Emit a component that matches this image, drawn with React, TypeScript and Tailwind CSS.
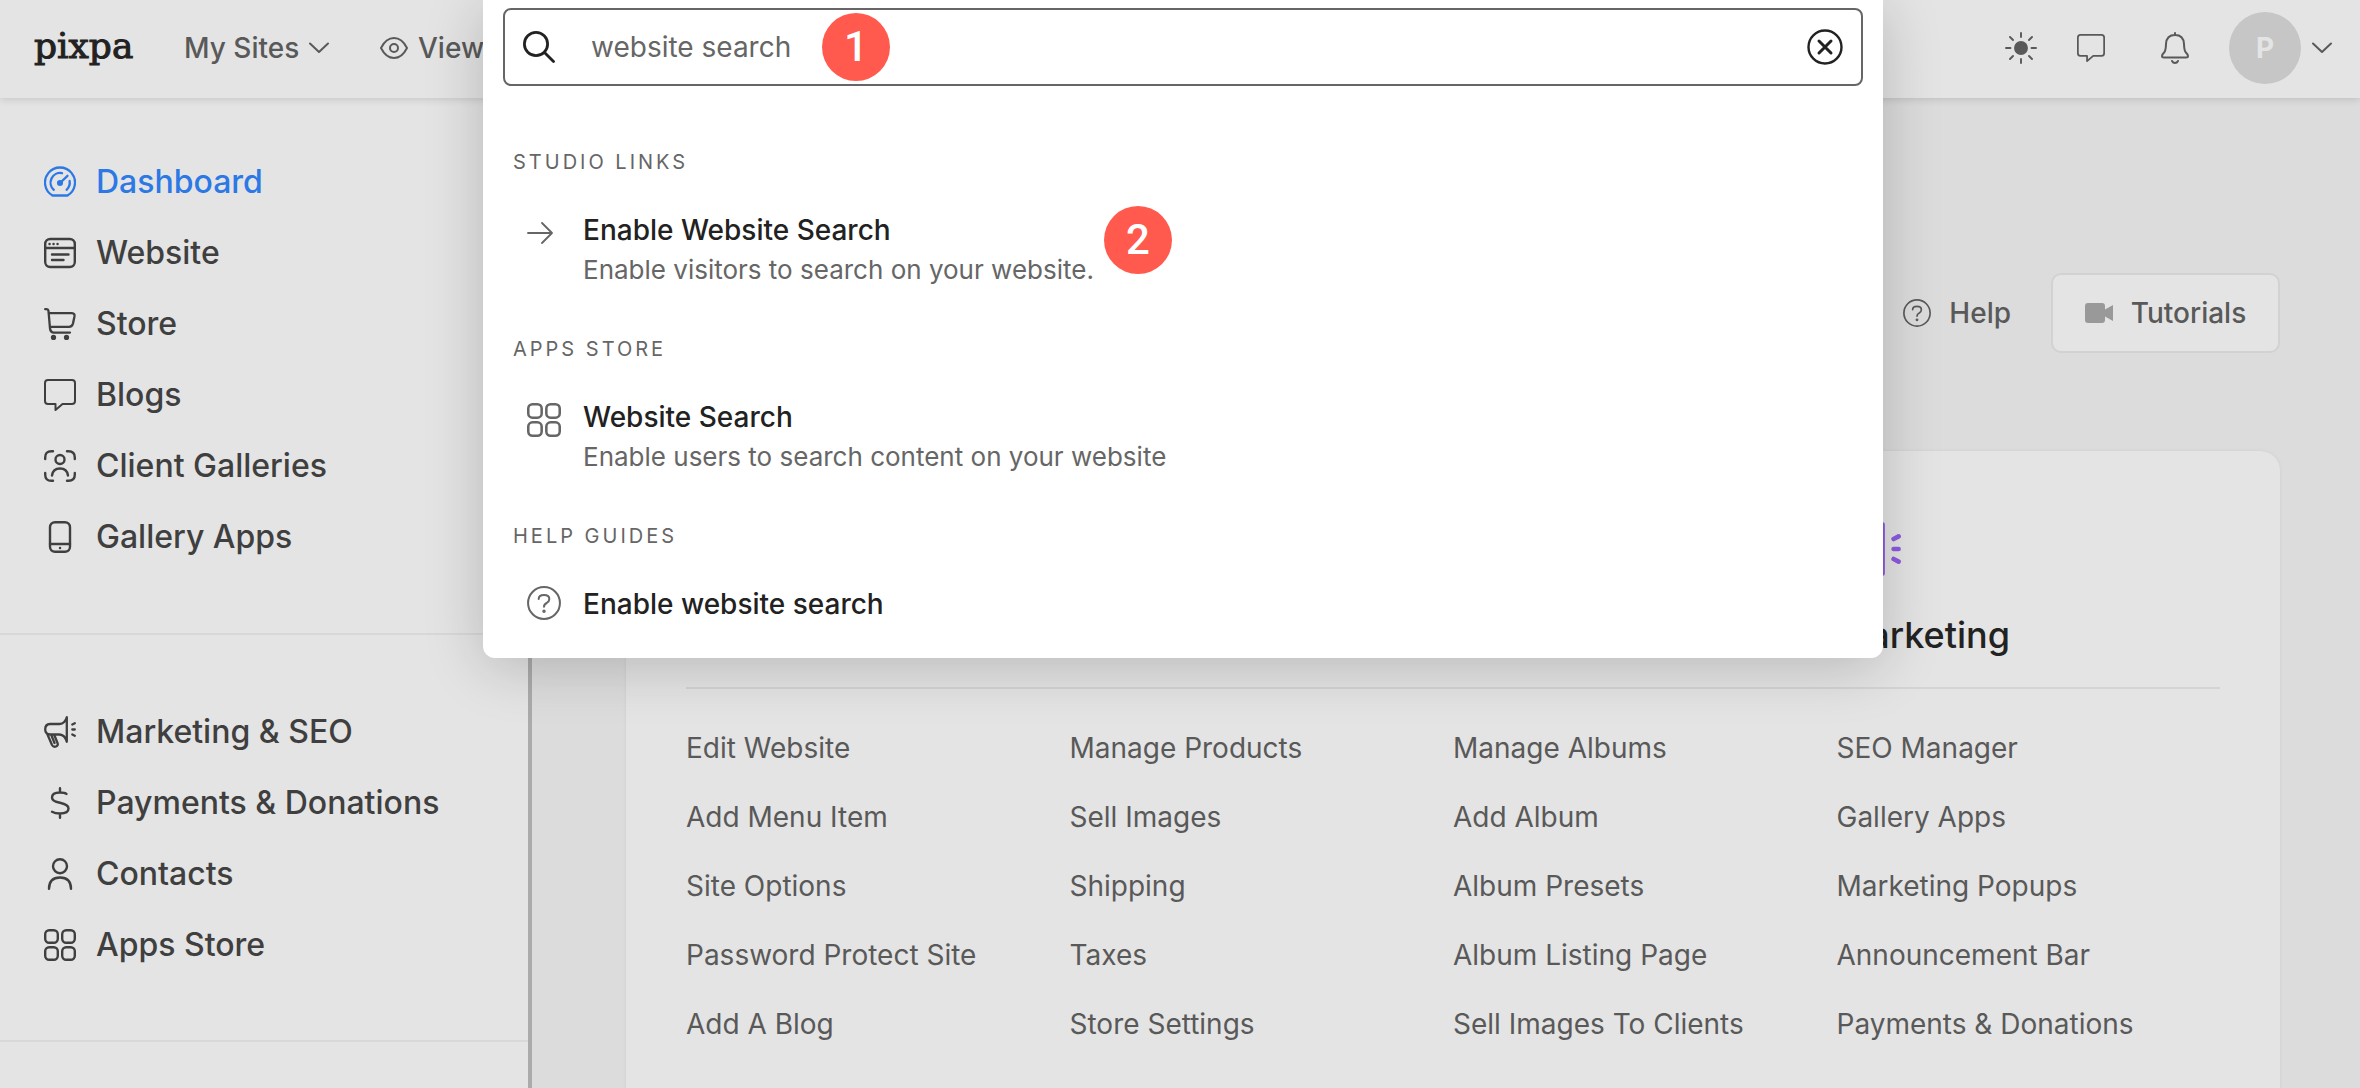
import { type ReactNode } from "react";

type IconProps = { className?: string };

function Svg({ className = "", size = "0 0 32 32", sw = 2.3, children }: IconProps & { size?: string; sw?: number; children: ReactNode }) {
  return (
    <svg viewBox={size} className={`shrink-0 ${className}`} fill="none" stroke="currentColor" strokeWidth={sw} strokeLinecap="round" strokeLinejoin="round" aria-hidden="true">
      {children}
    </svg>
  );
}

const GaugeIcon = ({ className }: IconProps) => (
  <Svg className={className}>
    <path d="M8.5 29.5 H23.5 A15 15 0 1 0 8.5 29.5 Z" />
    <path d="M9.8 23.8 A9.6 9.6 0 0 1 18 7.2 M25.6 15 A9.8 9.8 0 0 1 22.6 23.8" />
    <path d="M16 17 L23.5 9.8" />
    <circle cx="16" cy="17" r="1.9" fill="currentColor" />
  </Svg>
);
const WebsiteIcon = ({ className }: IconProps) => (
  <Svg className={className} sw={2.4}>
    <rect x="1.2" y="2" width="29.6" height="28" rx="5" />
    <path d="M1.2 11 H30.8 M8 17.5 H24.5 M8 23 H19.5" />
    <path d="M5.5 7 h.1 M9.5 7 h.1 M13.5 7 h.1" />
  </Svg>
);
const CartIcon = ({ className }: IconProps) => (
  <Svg className={className}>
    <path d="M1.2 1.2 H2.5 Q4.3 1.4 4.5 3 L6 20.5 Q6.5 24.6 10 24.6 H26" />
    <path d="M5 5.2 H28 Q30.9 5.4 30.5 8.2 L29 15.5 Q28.2 18.8 25 18.8 H6" />
    <circle cx="9.5" cy="29.5" r="1.5" fill="currentColor" />
    <circle cx="22.5" cy="29.5" r="1.5" fill="currentColor" />
  </Svg>
);
const ChatIcon = ({ className }: IconProps) => (
  <Svg className={className} sw={2}>
    <path d="M4 1 H28 Q31 1 31 4 V22 Q31 25 28 25 H18.5 L11.5 31 V25 H4 Q1 25 1 22 V4 Q1 1 4 1 Z" />
  </Svg>
);
const ClientIcon = ({ className }: IconProps) => (
  <Svg className={className} sw={2.4}>
    <path d="M1.2 9 V7.5 Q1.2 1.2 7.5 1.2 H9 M23 1.2 H24.5 Q30.8 1.2 30.8 7.5 V9 M30.8 23 V24.5 Q30.8 30.8 24.5 30.8 H23 M9 30.8 H7.5 Q1.2 30.8 1.2 24.5 V23" />
    <circle cx="16" cy="9.5" r="4.5" />
    <path d="M8 25.5 Q9 18.5 16 18.5 T24 25.5" />
  </Svg>
);
const PhoneIcon = ({ className }: IconProps) => (
  <Svg className={className} sw={2.4}>
    <rect x="6" y="1.2" width="20" height="29.6" rx="5" />
    <path d="M6 23 H26 M16 27 h.1" />
  </Svg>
);
const MegaphoneIcon = ({ className }: IconProps) => (
  <Svg className={className}>
    <path d="M22.8 1.2 V25.8 Q21 19 15.5 18.5 H6 Q1.2 18 1.2 13.2 T6 8 H15.5 Q21 7.5 22.8 1.2 Z" />
    <path d="M3.5 18.5 L8 29 Q9.5 31.5 12 30.5 T13.5 27 L10.5 19.5 M7.5 19.5 L10.5 27" />
    <path d="M28.3 8.5 L30.8 7.2 M28.3 13.5 H30.8 M28.3 18.5 L30.8 19.8" />
  </Svg>
);
const DollarIcon = ({ className }: IconProps) => (
  <Svg className={className} sw={2.4}>
    <path d="M16 1.2 V5.5 M16 26.5 V30.8 M22.5 7 Q21 5.5 16 5.5 Q8 5.5 8 10.5 Q8 14.2 16 15.8 Q24.5 17.6 24.5 21.5 Q24.5 26.5 16 26.5 Q11 26.5 8 24.8" />
  </Svg>
);
const PersonIcon = ({ className }: IconProps) => (
  <Svg className={className} sw={2.4}>
    <circle cx="16" cy="8.2" r="7" />
    <path d="M5 30.8 Q5 19.5 16 19.5 T27 30.8" />
  </Svg>
);
const AppsIcon = ({ className }: IconProps) => (
  <Svg className={className} sw={2.4}>
    <rect x="1.2" y="1.2" width="12.6" height="12.6" rx="4" />
    <rect x="18.2" y="1.2" width="12.6" height="12.6" rx="4" />
    <rect x="1.2" y="18.2" width="12.6" height="12.6" rx="4" />
    <rect x="18.2" y="18.2" width="12.6" height="12.6" rx="4" />
  </Svg>
);
const HelpIcon = ({ className }: IconProps) => (
  <Svg className={className} sw={1.9}>
    <circle cx="16" cy="16" r="15" />
    <path d="M11 12.2 Q11 8.4 16 8.4 T21 12.2 Q21 14.4 18.5 16 Q16 17.4 16 19.6" />
    <circle cx="16" cy="23.8" r=".7" fill="currentColor" />
  </Svg>
);
const ChevronIcon = ({ className }: IconProps) => (
  <Svg className={className} size="0 0 20 12" sw={2}>
    <path d="M1 1.5 L10 10 L19 1.5" />
  </Svg>
);
const EyeIcon = ({ className }: IconProps) => (
  <Svg className={className} size="0 0 28 22" sw={2}>
    <path d="M1 11 Q6 1 14 1 T27 11 Q22 21 14 21 T1 11 Z" />
    <circle cx="14" cy="11" r="4" />
  </Svg>
);
const SunIcon = ({ className }: IconProps) => (
  <Svg className={className} sw={1.9}>
    <circle cx="16" cy="16" r="6" fill="currentColor" />
    <path d="M16 1 V5 M16 27 V31 M1 16 H5.5 M26.5 16 H31 M5 5 L8 8 M24 24 L27 27 M5 27 L8 24 M24 8 L27 5" />
  </Svg>
);
const BellIcon = ({ className }: IconProps) => (
  <Svg className={className} size="0 0 28 32" sw={2}>
    <path d="M14 1 V3 M14 3 Q5.5 3 5 12 Q4.8 18 3.5 20 Q1 22.5 1 24 Q1 25.5 3 25.5 H25 Q27 25.5 27 24 Q27 22.5 24.5 20 Q23.2 18 23 12 Q22.5 3 14 3 Z" />
    <path d="M11 29 Q12 31 14 31 T17 29" />
  </Svg>
);
const VideoIcon = ({ className }: IconProps) => (
  <svg viewBox="0 0 28 20" className={className} fill="currentColor" aria-hidden="true">
    <path d="M3 0 H17 Q20 0 20 3 V6.5 L28 2 V18 L20 13.5 V17 Q20 20 17 20 H3 Q0 20 0 17 V3 Q0 0 3 0 Z" />
  </svg>
);
const SearchIcon = ({ className }: IconProps) => (
  <Svg className={className} sw={2.8}>
    <circle cx="13" cy="13" r="11.6" />
    <path d="M21.5 21.5 L30.5 30.5" />
  </Svg>
);
const ClearIcon = ({ className }: IconProps) => (
  <Svg className={className} size="0 0 36 36" sw={2.4}>
    <circle cx="18" cy="18" r="16.5" />
    <path d="M12 12 L24 24 M24 12 L12 24" strokeWidth="3" />
  </Svg>
);
const ArrowIcon = ({ className }: IconProps) => (
  <Svg className={className} size="0 0 26 22" sw={1.8}>
    <path d="M1 11 H25 M15 1 L25 11 L15 21" />
  </Svg>
);

type NavEntry = { label: string; Icon: (p: IconProps) => ReactNode; active?: boolean };

const mainNav: NavEntry[] = [
  { label: "Dashboard", Icon: GaugeIcon, active: true },
  { label: "Website", Icon: WebsiteIcon },
  { label: "Store", Icon: CartIcon },
  { label: "Blogs", Icon: ChatIcon },
  { label: "Client Galleries", Icon: ClientIcon },
  { label: "Gallery Apps", Icon: PhoneIcon },
];
const moreNav: NavEntry[] = [
  { label: "Marketing & SEO", Icon: MegaphoneIcon },
  { label: "Payments & Donations", Icon: DollarIcon },
  { label: "Contacts", Icon: PersonIcon },
  { label: "Apps Store", Icon: AppsIcon },
];

function NavList({ items }: { items: NavEntry[] }) {
  return (
    <ul className="flex flex-col">
      {items.map(({ label, Icon, active }) => (
        <li key={label}>
          <a href="#" className={`flex h-[71px] items-center gap-5 pl-11 text-[32px] font-medium ${active ? "text-[#2c79e5]" : "text-[#3f3f3f]"}`}>
            <Icon className="size-8" />
            {label}
          </a>
        </li>
      ))}
    </ul>
  );
}

const columns = [
  { links: ["Edit Website", "Add Menu Item", "Site Options", "Password Protect Site", "Add A Blog"] },
  { links: ["Manage Products", "Sell Images", "Shipping", "Taxes", "Store Settings"] },
  { links: ["Manage Albums", "Add Album", "Album Presets", "Album Listing Page", "Sell Images To Clients"] },
  { title: "Marketing", Icon: MegaphoneIcon, links: ["SEO Manager", "Gallery Apps", "Marketing Popups", "Announcement Bar", "Payments & Donations"] },
];

const results = [
  { group: "Studio Links", Icon: ArrowIcon, size: "h-[22px] w-[26px] mt-3", title: "Enable Website Search", text: "Enable visitors to search on your website.", step: "2" },
  { group: "Apps Store", Icon: AppsIcon, size: "size-[34px] mt-1.5", title: "Website Search", text: "Enable users to search content on your website" },
  { group: "Help Guides", Icon: HelpIcon, size: "size-[34px] mt-0.5", title: "Enable website search" },
];

function Step({ n, className = "" }: { n: string; className?: string }) {
  return (
    <span className={`flex size-[68px] shrink-0 items-center justify-center rounded-full bg-[#ff5a4d] font-[Roboto,sans-serif] text-[42px] leading-none font-medium text-white ${className}`}>
      {n}
    </span>
  );
}

function SearchPanel() {
  return (
    <div className="pointer-events-none absolute inset-x-0 top-0 flex justify-center pl-1.5">
      <section role="dialog" aria-label="Search" className="pointer-events-auto w-full max-w-[1400px] rounded-b-xl bg-white px-5 pt-2 pb-[34px] shadow-[0_8px_60px_rgba(0,0,0,0.2)]">
        <label className="relative flex h-[78px] items-center rounded-lg border-2 border-[#666] px-[18px]">
          <SearchIcon className="size-8 text-[#222]" />
          <input aria-label="Search" defaultValue="website search" className="ml-9 min-w-0 flex-1 bg-transparent text-[28px] text-[#666] outline-none" />
          <button type="button" aria-label="Clear search">
            <ClearIcon className="size-9 text-[#222]" />
          </button>
          <Step n="1" className="absolute left-[317px]" />
        </label>
        <div className="flex flex-col gap-[43px] px-2.5 pt-[60px]">
          {results.map(({ group, Icon, size, title, text, step }) => (
            <div key={group} className="flex flex-col gap-8">
              <h2 className="text-[20px] leading-8 tracking-[3px] text-[#666] uppercase">{group}</h2>
              <a href="#" className="flex pl-[14px]">
                <span className="flex w-14 shrink-0 items-start">
                  <Icon className={`text-[#666] ${size}`} />
                </span>
                <span className="flex flex-col">
                  <span className="text-[28px] leading-10 font-medium text-[#222]">{title}</span>
                  {text && <span className="text-[26px] leading-10 text-[#666]">{text}</span>}
                </span>
                {step && <Step n={step} className="-mt-1 ml-2.5" />}
              </a>
            </div>
          ))}
        </div>
      </section>
    </div>
  );
}

export default function App() {
  return (
    <div className="relative flex h-screen flex-col overflow-hidden bg-[#dcdcdc] font-['Inter',sans-serif]">
      <header className="z-0 flex h-[98px] shrink-0 items-center justify-between bg-[#e4e4e4] pr-7 pb-0.5 pl-[34px] text-[#595959] shadow-[0_1px_8px_rgba(0,0,0,0.15)]">
        <div className="flex items-center text-[28px] font-medium">
          <a href="#" className="w-[150px] pb-1 font-['DejaVu_Serif',serif] text-[36px] leading-none font-normal text-[#222] [-webkit-text-stroke:1px_#222]">pixpa</a>
          <button type="button" className="flex w-[196px] items-center gap-2.5">
            My Sites <ChevronIcon className="h-3 w-5" />
          </button>
          <a href="#" className="flex items-center gap-2.5">
            <EyeIcon className="h-[22px] w-7" /> View
          </a>
        </div>
        <div className="flex items-center">
          <button type="button" aria-label="Theme" className="mr-10"><SunIcon className="size-8" /></button>
          <button type="button" aria-label="Messages" className="mr-14"><ChatIcon className="size-7" /></button>
          <button type="button" aria-label="Notifications" className="mr-10"><BellIcon className="h-8 w-7" /></button>
          <button type="button" aria-label="Account" className="flex items-center gap-[11px]">
            <span className="flex size-[72px] items-center justify-center rounded-full bg-[#c6c6c6] text-[28px] font-bold text-[#e4e4e4]">P</span>
            <ChevronIcon className="h-3 w-5" />
          </button>
        </div>
      </header>
      <div className="flex min-h-0 flex-1">
        <nav className="w-[532px] shrink-0 border-r-4 border-[#ababab] bg-[#e4e4e4]">
          <div className="border-b-2 border-[#d8d8d8] pt-12 pb-[61px]"><NavList items={mainNav} /></div>
          <div className="border-b-2 border-[#d8d8d8] pt-[61px] pb-[60px]"><NavList items={moreNav} /></div>
        </nav>
        <main className="min-w-0 flex-1 pr-20 pl-[94px]">
          <div className="flex justify-end gap-10 pt-[175px] pb-[98px] text-[28px] font-medium text-[#595959]">
            <a href="#" className="flex items-center gap-[18px]"><HelpIcon className="size-7" />Help</a>
            <button type="button" className="flex h-20 w-[229px] items-center justify-center gap-[18px] rounded-[10px] border-2 border-[#d2d2d2] bg-[#e4e4e4]">
              <VideoIcon className="h-5 w-7 text-[#999]" />Tutorials
            </button>
          </div>
          <div className="h-[700px] rounded-[20px] bg-[#e4e4e4] px-[60px] pt-[71px] shadow-[0_0_4px_rgba(0,0,0,0.06)]">
            <div className="grid grid-cols-4 border-b-2 border-[#d4d4d4] pb-7">
              {columns.map(({ title, Icon }, i) => (
                <div key={i}>
                  {Icon && <Icon className="size-16 text-[#8e5ae0]" />}
                  {title && <h2 className="mt-[25px] text-[36px] leading-[48px] font-medium text-[#222]">{title}</h2>}
                </div>
              ))}
            </div>
            <div className="grid grid-cols-4 pt-6">
              {columns.map(({ links }, i) => (
                <ul key={i}>
                  {links.map((l) => (
                    <li key={l} className="flex h-[69px] items-center"><a href="#" className="text-[28px] text-[#595959]">{l}</a></li>
                  ))}
                </ul>
              ))}
            </div>
          </div>
        </main>
      </div>
      <SearchPanel />
    </div>
  );
}
